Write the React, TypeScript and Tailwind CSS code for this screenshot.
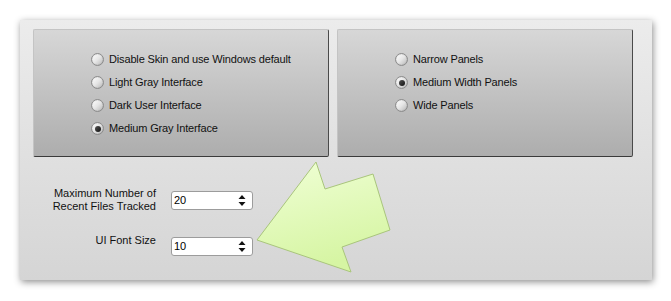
import React from 'react';

const font = { fontFamily: '"Liberation Sans", Arial, sans-serif' };

const Radio: React.FC<{ label: string; checked?: boolean }> = ({ label, checked }) => (
  <div className="flex items-center h-[23px]">
    <span className="w-[13px] h-[13px] rounded-full border border-[#8c8c8c] bg-gradient-to-br from-[#ffffff] via-[#e6e6e6] to-[#b8b8b8] flex items-center justify-center shadow-[inset_0_0_1px_rgba(0,0,0,0.3)]">
      {checked && <span className="w-[6px] h-[6px] rounded-full bg-gradient-to-br from-[#555] to-[#111]" />}
    </span>
    <span className="ml-[5px] text-[11px] tracking-[-0.15px] text-[#111] leading-none">{label}</span>
  </div>
);

const SpinBox: React.FC<{ value: string }> = ({ value }) => (
  <div className="w-[82px] h-[19px] bg-white border border-[#9c9c9c] rounded-[3px] flex items-center justify-between pl-[2px] pr-[6px]">
    <span className="text-[11px] text-black leading-none">{value}</span>
    <svg width="8" height="13" viewBox="0 0 8 13">
      <polygon points="4,1 7.5,5 0.5,5" fill="#111" />
      <polygon points="0.5,8 7.5,8 4,12" fill="#111" />
    </svg>
  </div>
);

const GroupBox: React.FC<{ children: React.ReactNode; padLeft: string }> = ({ children, padLeft }) => (
  <div className={`w-[296px] h-[128px] rounded-[2px] border border-t-[#c4c4c4] border-l-[#c4c4c4] border-r-[#4a4a4a] border-b-[#3a3a3a] bg-gradient-to-b from-[#d7d7d7] to-[#adadad] pt-[18px] ${padLeft}`}>
    {children}
  </div>
);

export default function App() {
  return (
    <div className="relative w-[671px] h-[301px] bg-white overflow-hidden" style={font}>
      <div className="ml-[20px] mt-[20px] w-[632px] h-[260px] bg-gradient-to-b from-[#ececec] to-[#d5d5d5] shadow-[1px_2px_7px_rgba(0,0,0,0.45)] pt-[9px] pl-[13px]">
        <div className="flex gap-[8px]">
          <GroupBox padLeft="pl-[57px]">
            <Radio label="Disable Skin and use Windows default" />
            <Radio label="Light Gray Interface" />
            <Radio label="Dark User Interface" />
            <Radio label="Medium Gray Interface" checked />
          </GroupBox>
          <GroupBox padLeft="pl-[57px]">
            <Radio label="Narrow Panels" />
            <Radio label="Medium Width Panels" checked />
            <Radio label="Wide Panels" />
          </GroupBox>
        </div>

        <div className="mt-[34px] flex flex-col gap-[24px]">
          <div className="flex items-start">
            <div className="w-[123px] text-right text-[11px] leading-[13px] text-[#111] -mt-[4px]">
              Maximum Number of
              <br />
              Recent Files Tracked
            </div>
            <div className="ml-[15px]">
              <SpinBox value="20" />
            </div>
          </div>
          <div className="flex items-start">
            <div className="w-[123px] text-right text-[11px] leading-[13px] text-[#111] -mt-[3px]">UI Font Size</div>
            <div className="ml-[15px]">
              <SpinBox value="10" />
            </div>
          </div>
        </div>
      </div>

      <svg className="absolute left-0 top-0" width="671" height="301" viewBox="0 0 671 301">
        <defs>
          <linearGradient id="ag" x1="0" y1="0" x2="0.3" y2="1">
            <stop offset="0" stopColor="#f0ffd6" />
            <stop offset="1" stopColor="#d6f5a3" />
          </linearGradient>
        </defs>
        <polygon
          points="316,162 325,189 373,174 390,230 342,247 351,272 257,240"
          fill="url(#ag)"
          stroke="#a9c57c"
          strokeWidth="1"
          strokeLinejoin="round"
        />
      </svg>
    </div>
  );
}
